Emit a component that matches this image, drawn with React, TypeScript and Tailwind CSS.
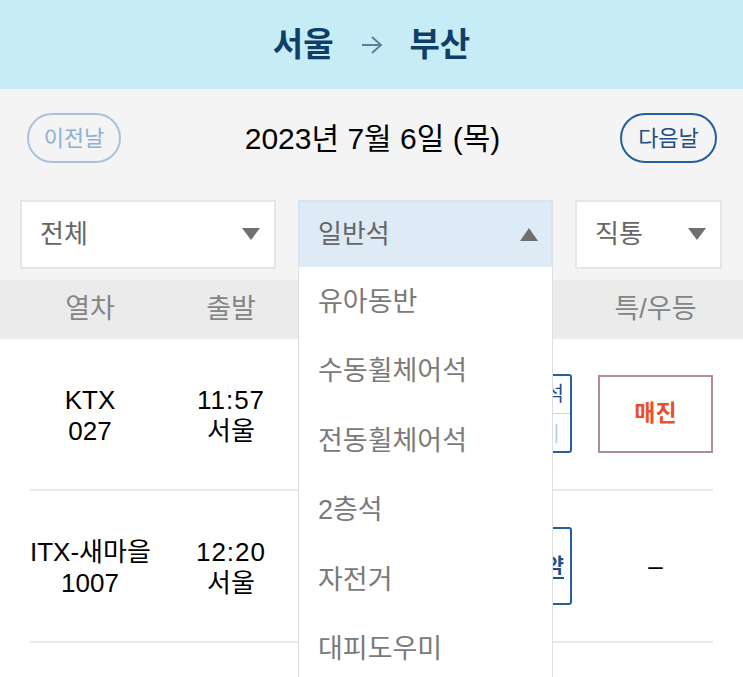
import React from "react";

const FONT = { fontFamily: '"Liberation Sans", "Noto Sans CJK KR", sans-serif' };

function Tri({ up = false }: { up?: boolean }) {
  return (
    <svg width="18" height="13" viewBox="0 0 18 13" className="shrink-0">
      {up ? <polygon points="0,13 18,13 9,0" fill="#707070" /> : <polygon points="0,0 18,0 9,12" fill="#707070" />}
    </svg>
  );
}

const items = ["유아동반", "수동휠체어석", "전동휠체어석", "2층석", "자전거", "대피도우미"];

export default function App() {
  return (
    <div className="relative w-[743px] h-[677px] overflow-hidden bg-white" style={FONT}>
      <div className="h-[89px] bg-[#c6ecf6] flex items-center justify-center gap-[26px] text-[#0f3e66]">
        <span className="text-[33px] font-bold">서울</span>
        <svg width="24" height="22" viewBox="0 0 24 22">
          <path d="M2 11 H21 M12 3 L21 11 L12 19" stroke="#5b7d99" strokeWidth="1.8" fill="none" />
        </svg>
        <span className="text-[33px] font-bold">부산</span>
      </div>

      <div className="bg-[#f4f4f4] pt-[24px] pb-[11px]">
        <div className="flex items-center justify-between pl-[27px] pr-[26px] h-[50px]">
          <div className="w-[94px] h-[50px] rounded-full border-2 border-[#a9c3de] flex items-center justify-center text-[22px] text-[#8fb0d2]">
            이전날
          </div>
          <div className="text-[30px] text-black pl-[4px]">2023년 7월 6일 (목)</div>
          <div className="w-[97px] h-[50px] rounded-full border-2 border-[#245f9c] flex items-center justify-center text-[22px] text-[#1d4f86]">
            다음날
          </div>
        </div>

        <div className="flex gap-[22px] px-[20px] mt-[37px] h-[69px]">
          <div className="w-[256px] bg-white border-2 border-[#e6e6e6] flex items-center justify-between pl-[18px] pr-[14px] text-[26px] text-[#666]">
            <span>전체</span>
            <Tri />
          </div>
          <div className="relative z-10 w-[255px] bg-[#deebf6] border-2 border-[#d9e4ee] flex items-center justify-between pl-[18px] pr-[13px] text-[26px] text-[#666]">
            <span>일반석</span>
            <Tri up />
            <div className="absolute left-[-2px] right-[-2px] top-full bg-white border border-[#dedede] border-t-0">
              {items.map((t) => (
                <div key={t} className="h-[69.5px] flex items-center pl-[19px] text-[27px] text-[#7a7a7a]">
                  {t}
                </div>
              ))}
            </div>
          </div>
          <div className="w-[147px] bg-white border-2 border-[#e6e6e6] flex items-center justify-between pl-[18px] pr-[14px] text-[26px] text-[#666]">
            <span>직통</span>
            <Tri />
          </div>
        </div>
      </div>

      <div className="h-[59px] bg-[#ebebeb] flex items-center px-[30px] text-[27px] text-[#858585]">
        <div className="w-[120px] text-center">열차</div>
        <div className="w-[162px] text-center">출발</div>
        <div className="w-[286px]" />
        <div className="w-[115px] text-center">특/우등</div>
      </div>

      <div className="px-[30px]">
        <div className="h-[152px] flex items-center border-b-2 border-[#e8e8e8] text-[26px] text-black leading-[31px]">
          <div className="w-[120px] text-center pt-[4px]">KTX<br />027</div>
          <div className="w-[162px] text-center pt-[4px]"><span className="tracking-[1px]">11:57</span><br />서울</div>
          <div className="w-[180px]" />
          <div className="w-[80px] h-[79px] border-2 border-[#23609e] rounded-[3px] flex flex-col text-[#1d4f86] mt-[-1px]">
            <div className="flex-1 flex items-center justify-end pr-[6px] text-[20px] border-b border-[#c8d8ea]">좌석</div>
            <div className="flex-1 flex items-center justify-end pr-[11px] text-[20px] text-[#b8cbe2]">|</div>
          </div>
          <div className="w-[26px]" />
          <div className="w-[115px] h-[78px] border-2 border-[#b48c98] flex items-center justify-center text-[23px] font-bold text-[#e8512b] mt-[-1px]">
            매진
          </div>
        </div>
        <div className="h-[152px] flex items-center border-b-2 border-[#e8e8e8] text-[26px] text-black leading-[31px]">
          <div className="w-[120px] text-center whitespace-nowrap pt-[4px]">ITX-새마을<br />1007</div>
          <div className="w-[162px] text-center pt-[4px]"><span className="tracking-[1px]">12:20</span><br />서울</div>
          <div className="w-[180px]" />
          <div className="w-[80px] h-[78px] border-2 border-[#23609e] rounded-[3px] flex items-center justify-end pr-[6px] text-[20px] font-bold text-[#1d4f86] whitespace-nowrap">
            <span className="underline underline-offset-4">예약</span>
          </div>
          <div className="w-[26px]" />
          <div className="w-[115px] flex items-center justify-center text-[26px]">–</div>
        </div>
      </div>
    </div>
  );
}
